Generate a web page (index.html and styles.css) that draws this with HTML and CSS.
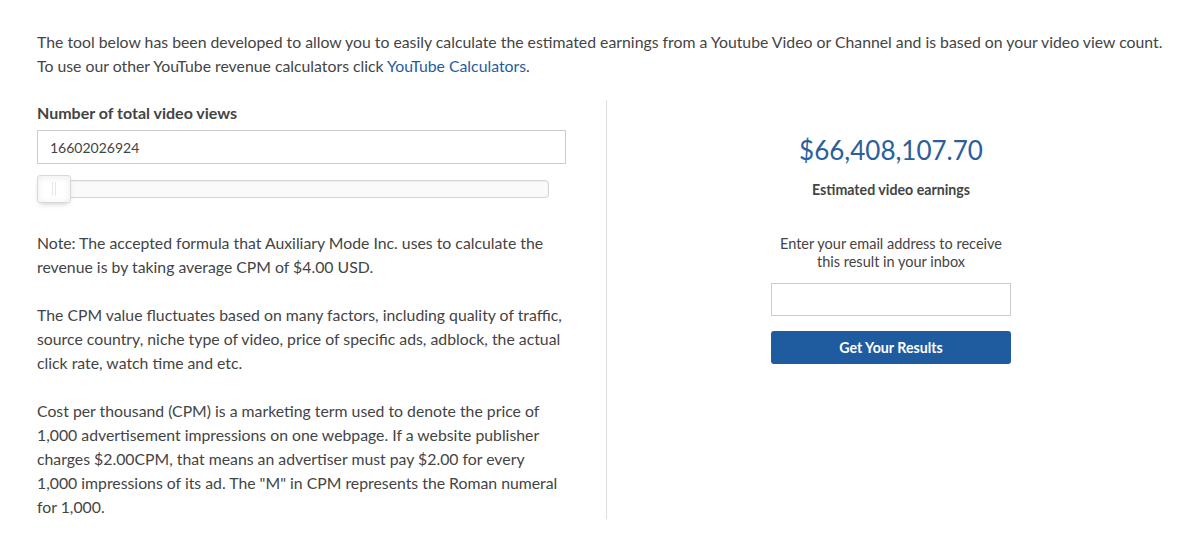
FILE: index.html
```html
<!DOCTYPE html>
<html lang="en">
<head>
    <meta charset="UTF-8">
    <meta name="viewport" content="width=device-width, initial-scale=1.0">
    <title>YouTube Money Calculator</title>
    <link rel="stylesheet" href="styles.css">
</head>
<body>
    <div class="page">
        <p class="intro">
            The tool below has been developed to allow you to easily calculate the estimated earnings from a Youtube Video or Channel and is based on your video view count.<br>
            To use our other YouTube revenue calculators click <a href="#">YouTube Calculators</a>.
        </p>

        <div class="calc-row">
            <div class="calc-left">
                <label for="views">Number of total video views</label>
                <input type="text" id="views" value="16602026924">

                <div class="slider">
                    <div class="slider-handle"></div>
                </div>

                <p class="note">Note: The accepted formula that Auxiliary Mode Inc. uses to calculate the revenue is by taking average CPM of $4.00 USD.</p>
                <p class="note">The CPM value fluctuates based on many factors, including quality of traffic, source country, niche type of video, price of specific ads, adblock, the actual click rate, watch time and etc.</p>
                <p class="note">Cost per thousand (CPM) is a marketing term used to denote the price of 1,000 advertisement impressions on one webpage. If a website publisher charges $2.00CPM, that means an advertiser must pay $2.00 for every 1,000 impressions of its ad. The "M" in CPM represents the Roman numeral for 1,000.</p>
            </div>

            <div class="calc-right">
                <div class="amount">$66,408,107.70</div>
                <div class="amount-label">Estimated video earnings</div>

                <p class="email-text">Enter your email address to receive<br>this result in your inbox</p>
                <input type="text" class="email-input">
                <button>Get Your Results</button>
            </div>
        </div>
    </div>
</body>
</html>
```

FILE: styles.css
```css
* {
    margin: 0;
    padding: 0;
    box-sizing: border-box;
}

body {
    font-family: Lato, 'Open Sans', sans-serif;
    font-size: 15.8px;
    line-height: 24px;
    color: #444;
    background-color: #fff;
}

.page {
    padding: 30px 0 0 37px;
    width: 1175px;
}

.intro a {
    color: #1f5c9f;
    text-decoration: none;
}

.calc-row {
    display: grid;
    grid-template-columns: 569px 569px;
    margin-top: 22px;
}

.calc-left {
    padding-right: 40px;
    padding-top: 1px;
}

label {
    display: block;
    font-size: 16px;
    font-weight: bold;
    margin-bottom: 5px;
}

input[type="text"] {
    display: block;
    width: 100%;
    height: 34px;
    padding: 0 12px;
    border: 1px solid #ccc;
    font-family: Lato, sans-serif;
    font-size: 14px;
    color: #444;
    outline: none;
}

/* slider */
.slider {
    position: relative;
    width: 512px;
    height: 18px;
    margin-top: 16px;
    background: #fafafa;
    border: 1px solid #d3d3d3;
    border-radius: 4px;
    box-shadow: inset 0 1px 1px #f0f0f0;
}

.slider-handle {
    position: absolute;
    left: -1px;
    top: -6px;
    width: 34px;
    height: 28px;
    background: #fff;
    border: 1px solid #d9d9d9;
    border-radius: 3px;
    box-shadow: inset 0 0 1px #fff, inset 0 1px 7px #ebebeb, 0 3px 6px -3px #bbb;
}

.slider-handle:before,
.slider-handle:after {
    content: "";
    position: absolute;
    top: 6px;
    height: 14px;
    width: 1px;
    background: #e8e7e6;
}

.slider-handle:before {
    left: 14px;
}

.slider-handle:after {
    left: 17px;
}

.note {
    margin-top: 24px;
}

.slider + .note {
    margin-top: 33px;
}

.calc-right {
    border-left: 1px solid #ddd;
    text-align: center;
    padding-top: 35px;
}

.amount {
    font-size: 26px;
    line-height: 30px;
    color: #2a5e9c;
}

.amount-label {
    margin-top: 16px;
    font-size: 14.2px;
    line-height: 18px;
    font-weight: bold;
}

.email-text {
    margin-top: 36px;
    font-size: 14.5px;
    line-height: 18px;
}

.calc-right .email-input {
    width: 240px;
    height: 33px;
    margin: 12px auto 0;
}

button {
    display: block;
    width: 240px;
    height: 33px;
    margin: 15px auto 0;
    background-color: #1f5c9f;
    color: #fff;
    border: none;
    border-radius: 3px;
    font-family: Lato, sans-serif;
    font-size: 14.2px;
    font-weight: bold;
    cursor: pointer;
}
```
